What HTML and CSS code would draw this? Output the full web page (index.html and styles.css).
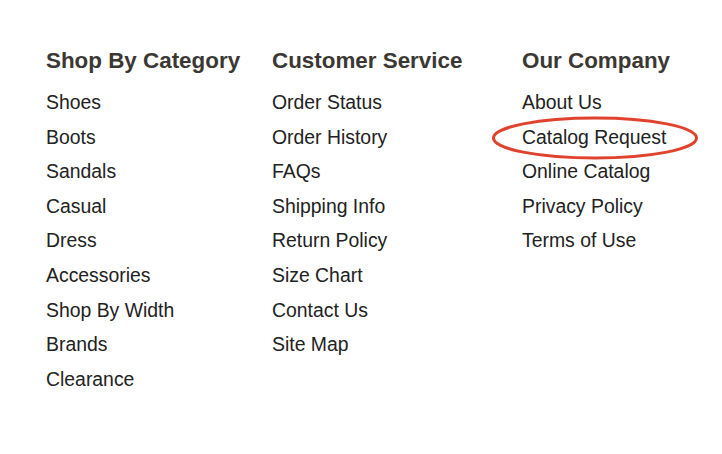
FILE: index.html
```html
<!DOCTYPE html>
<html>
<head>
<meta charset="utf-8">
<link rel="stylesheet" href="styles.css">
</head>
<body>
<div class="footer">
  <div class="col col1">
    <h2 class="head">Shop By Category</h2>
    <ul class="links">
      <li>Shoes</li>
      <li>Boots</li>
      <li>Sandals</li>
      <li>Casual</li>
      <li>Dress</li>
      <li>Accessories</li>
      <li>Shop By Width</li>
      <li>Brands</li>
      <li>Clearance</li>
    </ul>
  </div>
  <div class="col col2">
    <h2 class="head">Customer Service</h2>
    <ul class="links">
      <li>Order Status</li>
      <li>Order History</li>
      <li>FAQs</li>
      <li>Shipping Info</li>
      <li>Return Policy</li>
      <li>Size Chart</li>
      <li>Contact Us</li>
      <li>Site Map</li>
    </ul>
  </div>
  <div class="col col3">
    <h2 class="head">Our Company</h2>
    <ul class="links">
      <li>About Us</li>
      <li class="circled">Catalog Request
        <svg class="ring" width="210" height="46" viewBox="0 0 210 46"><ellipse cx="104" cy="23" rx="101.5" ry="20" fill="none" stroke="#e0432d" stroke-width="3"/></svg>
      </li>
      <li>Online Catalog</li>
      <li>Privacy Policy</li>
      <li>Terms of Use</li>
    </ul>
  </div>
</div>
</body>
</html>
```
FILE: styles.css
```css
html, body {
  margin: 0;
  padding: 0;
  background: #fff;
}
body {
  font-family: "Liberation Sans", Arial, sans-serif;
  color: #222;
}
.footer {
  display: flex;
  padding: 47px 0 0 46px;
}
.col1 { width: 226px; }
.col2 { width: 250px; }
.col3 { width: 200px; }
.head {
  margin: 0 0 10px 0;
  font-size: 22.4px;
  line-height: 28px;
  font-weight: bold;
  color: #3b3733;
}
.links {
  list-style: none;
  margin: 0;
  padding: 0;
}
.links li {
  font-size: 19.4px;
  line-height: 34.6px;
  color: #222;
}
.circled {
  position: relative;
}
.ring {
  position: absolute;
  left: -31px;
  top: -5px;
}
```
